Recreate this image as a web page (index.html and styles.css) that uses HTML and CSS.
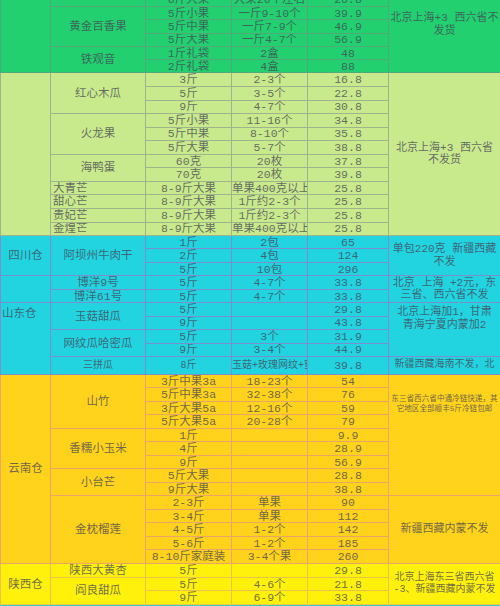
FILE: index.html
```html
<!DOCTYPE html>
<html lang="zh">
<head>
<meta charset="utf-8">
<title>仓库价格表</title>
<link rel="stylesheet" href="styles.css">
</head>
<body>
<table class="sheet">
  <colgroup>
    <col class="c-wh"><col class="c-name"><col class="c-spec"><col class="c-count"><col class="c-price"><col class="c-note">
  </colgroup>
  <tbody class="sec-green">
    <tr class="r0"><td rowspan="6"></td><td></td><td>6斤大果</td><td>大果20个左右</td><td>26.8</td><td rowspan="6" class="note note-top1">北京上海+3 西六省不<br>发货</td></tr>
    <tr class="rg"><td rowspan="3">黄金百香果</td><td>5斤小果</td><td>一斤9-10个</td><td>39.9</td></tr>
    <tr class="rg"><td>5斤中果</td><td>一斤7-9个</td><td>46.9</td></tr>
    <tr class="rg"><td>5斤大果</td><td>一斤4-7个</td><td>56.9</td></tr>
    <tr class="rg"><td rowspan="2">铁观音</td><td>1斤礼袋</td><td>2盒</td><td>48</td></tr>
    <tr class="rg"><td>2斤礼袋</td><td>4盒</td><td>88</td></tr>
  </tbody>
  <tbody class="sec-lime">
    <tr class="rl"><td rowspan="12"></td><td rowspan="3">红心木瓜</td><td>3斤</td><td>2-3个</td><td>16.8</td><td rowspan="12" class="note">北京上海+3 西六省<br>不发货</td></tr>
    <tr class="rl"><td>5斤</td><td>3-5个</td><td>22.8</td></tr>
    <tr class="rl"><td>9斤</td><td>4-7个</td><td>30.8</td></tr>
    <tr class="rl"><td rowspan="3">火龙果</td><td>5斤小果</td><td>11-16个</td><td>34.8</td></tr>
    <tr class="rl"><td>5斤中果</td><td>8-10个</td><td>35.8</td></tr>
    <tr class="rl"><td>5斤大果</td><td>5-7个</td><td>38.8</td></tr>
    <tr class="rl"><td rowspan="2">海鸭蛋</td><td>60克</td><td>20枚</td><td>37.8</td></tr>
    <tr class="rl"><td>70克</td><td>20枚</td><td>39.8</td></tr>
    <tr class="rl"><td class="left">大青芒</td><td>8-9斤大果</td><td>单果400克以上</td><td>25.8</td></tr>
    <tr class="rl"><td class="left">甜心芒</td><td>8-9斤大果</td><td>1斤约2-3个</td><td>25.8</td></tr>
    <tr class="rl"><td class="left">贵妃芒</td><td>8-9斤大果</td><td>1斤约2-3个</td><td>25.8</td></tr>
    <tr class="rl"><td class="left">金煌芒</td><td>8-9斤大果</td><td>单果400克以上</td><td>25.8</td></tr>
  </tbody>
  <tbody class="sec-cyan">
    <tr class="rc"><td rowspan="3">四川仓</td><td rowspan="3">阿坝州牛肉干</td><td>1斤</td><td>2包</td><td>65</td><td rowspan="3" class="note">单包220克 新疆西藏<br>不发</td></tr>
    <tr class="rc"><td>2斤</td><td>4包</td><td>124</td></tr>
    <tr class="rc"><td>5斤</td><td>10包</td><td>296</td></tr>
    <tr class="rc"><td rowspan="2"></td><td>博洋9号</td><td>5斤</td><td>4-7个</td><td>33.8</td><td rowspan="2" class="note">北京 上海 +2元，东<br>三省、西六省不发</td></tr>
    <tr class="rc"><td>博洋61号</td><td>5斤</td><td>4-7个</td><td>33.8</td></tr>
    <tr class="rc"><td rowspan="5" class="wh-top">山东仓</td><td rowspan="2">玉菇甜瓜</td><td>5斤</td><td></td><td>29.8</td><td rowspan="4" class="note note-top2">北京上海加1，甘肃<br>青海宁夏内蒙加2</td></tr>
    <tr class="rc"><td>9斤</td><td></td><td>43.8</td></tr>
    <tr class="rc"><td rowspan="2">网纹瓜哈密瓜</td><td>5斤</td><td>3个</td><td>31.9</td></tr>
    <tr class="rc"><td>9斤</td><td>3-4个</td><td>44.9</td></tr>
    <tr class="rs"><td class="small">三拼瓜</td><td class="small">8斤</td><td class="small">玉菇+玫瑰网纹+蜜瓜</td><td>39.8</td><td class="note small">新疆西藏海南不发，北</td></tr>
  </tbody>
  <tbody class="sec-yellow">
    <tr class="ry"><td rowspan="14">云南仓</td><td rowspan="4">山竹</td><td>3斤中果3a</td><td>18-23个</td><td>54</td><td rowspan="9" class="note tiny note-top3">东三省西六省中通冷链快递，其<br>它地区全部顺丰5斤冷链包邮</td></tr>
    <tr class="ry"><td>5斤中果3a</td><td>32-38个</td><td>76</td></tr>
    <tr class="ry"><td>3斤大果5a</td><td>12-16个</td><td>59</td></tr>
    <tr class="ry"><td>5斤大果5a</td><td>20-28个</td><td>79</td></tr>
    <tr class="ry"><td rowspan="3">香糯小玉米</td><td>1斤</td><td></td><td>9.9</td></tr>
    <tr class="ry"><td>4斤</td><td></td><td>28.9</td></tr>
    <tr class="ry"><td>9斤</td><td></td><td>56.9</td></tr>
    <tr class="ry"><td rowspan="2">小台芒</td><td>5斤大果</td><td></td><td>28.8</td></tr>
    <tr class="ry"><td>9斤大果</td><td></td><td>38.8</td></tr>
    <tr class="ry"><td rowspan="5">金枕榴莲</td><td>2-3斤</td><td>单果</td><td>90</td><td rowspan="5" class="note">新疆西藏内蒙不发</td></tr>
    <tr class="ry"><td>3-4斤</td><td>单果</td><td>112</td></tr>
    <tr class="ry"><td>4-5斤</td><td>1-2个</td><td>142</td></tr>
    <tr class="ry"><td>5-6斤</td><td>1-2个</td><td>185</td></tr>
    <tr class="ry"><td>8-10斤家庭装</td><td>3-4个果</td><td>260</td></tr>
  </tbody>
  <tbody class="sec-lemon">
    <tr class="rx"><td rowspan="3">陕西仓</td><td>陕西大黄杏</td><td>5斤</td><td></td><td>29.8</td><td rowspan="3" class="note small">北京上海东三省西六省<br>-3、新疆西藏内蒙不发</td></tr>
    <tr class="rx"><td rowspan="2">阎良甜瓜</td><td>5斤</td><td>4-6个</td><td>21.8</td></tr>
    <tr class="rx"><td>9斤</td><td>6-9个</td><td>33.8</td></tr>
  </tbody>
  <tbody class="sec-teal">
    <tr class="rt"><td></td><td></td><td></td><td></td><td></td><td></td></tr>
  </tbody>
</table>
</body>
</html>
```

FILE: styles.css
```css
html, body {
  margin: 0;
  padding: 0;
  overflow: hidden;
  background: #ffffff;
}

.sheet {
  width: 500px;
  table-layout: fixed;
  border-collapse: collapse;
  margin-top: -8px;
  font-family: "Liberation Mono", "Noto Sans CJK SC", monospace;
  font-size: 11.5px;
  line-height: 9px;
  color: rgba(70, 70, 85, 0.78);
}

.c-wh { width: 50px; }
.c-name { width: 95px; }
.c-spec { width: 86px; }
.c-count { width: 76px; }
.c-price { width: 81px; }
.c-note { width: 112px; }

.sheet td {
  padding: 0;
  text-align: center;
  vertical-align: middle;
  white-space: nowrap;
  overflow: hidden;
  text-overflow: clip;
  border: 1px solid;
}

.sec-green td { background: #22d070; border-color: #52a878; }
.sec-lime td { background: #c9e98d; border-color: #9fb48c; }
.sec-cyan td { background: #22d3e0; border-color: #7a90cc; }
.sec-yellow td { background: #ffd21c; border-color: #eda468; }
.sec-lemon td { background: #fff10c; border-color: #f1c04a; }
.sec-teal td { background: #34d2c4; border-color: #34d2c4; }

.r0 { height: 14px; }
.rg { height: 13.3px; }
.rl { height: 13.55px; }
.rc { height: 13.45px; }
.rs { height: 18px; }
.ry { height: 13.5px; }
.rx { height: 13.7px; }
.rt { height: 14px; }

.sheet td.left { text-align: left; padding-left: 2px; }

.sheet td.wh-top {
  vertical-align: top;
  text-align: left;
  padding-top: 6px;
  padding-left: 1px;
}

.sheet td.note {
  white-space: normal;
  line-height: 12.5px;
  font-size: 11px;
}

.sheet td.note-top1 { vertical-align: top; padding-top: 19px; }
.sheet td.note-top2 { vertical-align: top; padding-top: 3px; }
.sheet td.note-top3 { vertical-align: top; padding-top: 19px; }

.sheet td.small { font-size: 10px; }
.sheet td.note.small { font-size: 10px; line-height: 12px; }
.sheet td.note.tiny { font-size: 7.6px; line-height: 10px; }
```
